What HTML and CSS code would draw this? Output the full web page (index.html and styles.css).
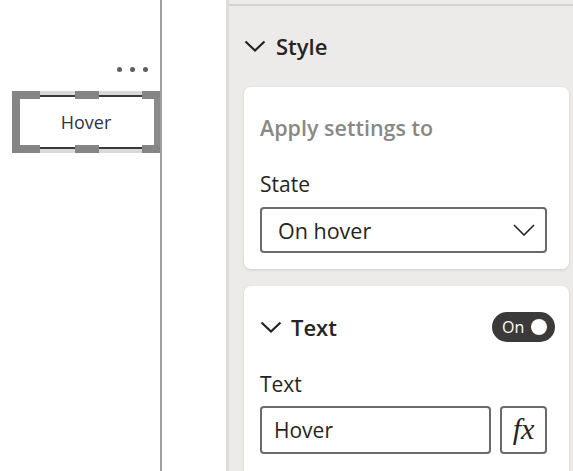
FILE: index.html
```html
<!DOCTYPE html>
<html>
<head>
<meta charset="utf-8">
<link rel="stylesheet" href="styles.css">
</head>
<body>
<div class="app">
  <div class="canvas">
    <div class="dots"><span></span><span></span><span></span></div>
    <div class="sel">
      <div class="btn">Hover</div>
      <i class="h h-tl"></i><i class="h h-tm"></i><i class="h h-tr"></i>
      <i class="h h-bl"></i><i class="h h-bm"></i><i class="h h-br"></i>
    </div>
  </div>
  <div class="divider"></div>
  <div class="gutter"></div>
  <div class="pane">
    <div class="topbar"></div>
    <div class="section-head">
      <svg class="chev" width="22" height="12" viewBox="0 0 22 12"><path d="M1.5 1.5 L11 10.5 L20.5 1.5" fill="none" stroke="#252423" stroke-width="2.2"/></svg>
      <span>Style</span>
    </div>
    <div class="card card1">
      <div class="muted">Apply settings to</div>
      <div class="label label-state">State</div>
      <div class="select">
        <span>On hover</span>
        <svg width="22" height="12" viewBox="0 0 22 12"><path d="M1 1 L11 11 L21 1" fill="none" stroke="#252423" stroke-width="1.6"/></svg>
      </div>
    </div>
    <div class="card card2">
      <div class="card-head">
        <div class="card-title">
          <svg class="chev" width="22" height="12" viewBox="0 0 22 12"><path d="M1.5 1.5 L11 10.5 L20.5 1.5" fill="none" stroke="#252423" stroke-width="2.2"/></svg>
          <span>Text</span>
        </div>
        <div class="toggle"><span>On</span><i></i></div>
      </div>
      <div class="label label-text">Text</div>
      <div class="input-row">
        <div class="input">Hover</div>
        <div class="fx">fx</div>
      </div>
    </div>
  </div>
</div>
</body>
</html>
```
FILE: styles.css
```css
* { box-sizing: border-box; }
html, body { margin: 0; padding: 0; }
body {
  font-family: "Open Sans", "Noto Sans", sans-serif;
  color: #252423;
  background: #ffffff;
  width: 573px;
  height: 471px;
  overflow: hidden;
}
.app {
  display: flex;
  height: 471px;
}
.canvas {
  width: 160px;
  flex: none;
  padding-top: 67px;
}
.dots {
  display: flex;
  justify-content: flex-end;
  gap: 8px;
  padding-right: 12px;
  height: 5px;
}
.dots span {
  width: 5px;
  height: 5px;
  border-radius: 50%;
  background: #605e5c;
}
.sel {
  position: relative;
  margin-top: 19px;
  margin-left: 12px;
  width: 148px;
  height: 62px;
  border-left: 8px solid #858585;
  border-right: 6px solid #8a8a8a;
  padding: 4px 0;
  background: #d9d9d9;
}
.btn {
  height: 54px;
  background: #fff;
  border-top: 2px solid #3b3a39;
  border-bottom: 2px solid #3b3a39;
  display: flex;
  align-items: center;
  justify-content: center;
  font-size: 18px;
  color: #2f3347;
  padding-right: 2px;
}
.h {
  position: absolute;
  height: 8px;
  background: #858585;
}
.h-tl, .h-tm, .h-tr { top: 0; }
.h-bl, .h-bm, .h-br { bottom: 0; }
.h-tl, .h-bl { left: -8px; width: 28px; }
.h-tm, .h-bm { left: 55px; width: 24px; }
.h-tr, .h-br { right: -6px; width: 18px; }
.divider {
  width: 2px;
  flex: none;
  background: #a19f9d;
}
.gutter {
  width: 64px;
  flex: none;
}
.pane {
  flex: 1;
  background: #edebe9;
  border-left: 3px solid #dedcda;
  overflow: hidden;
}
.topbar {
  height: 6px;
  border-bottom: 2px solid #d6d4d2;
}
.section-head {
  height: 81px;
  display: flex;
  align-items: center;
  gap: 10px;
  padding-left: 15px;
  padding-bottom: 1px;
  font-size: 22px;
  font-weight: 600;
}
.chev { flex: none; }
.card {
  background: #fff;
  margin: 0 4px 0 15px;
  border-radius: 7px;
  box-shadow: 0 1px 3px rgba(0,0,0,0.13);
  padding: 26px 22px 16px 16px;
}
.muted {
  font-size: 21.5px;
  font-weight: 600;
  color: #8a8886;
  line-height: 30px;
}
.label {
  font-size: 21px;
  line-height: 30px;
}
.label-state { margin-top: 26px; }
.select {
  margin-top: 8px;
  height: 46px;
  border: 2px solid #6b6a68;
  border-radius: 4px;
  display: flex;
  align-items: center;
  justify-content: space-between;
  padding: 0 10px 0 16px;
  font-size: 21.5px;
}
.card2 { margin-top: 17px; padding-bottom: 40px; }
.card-head {
  height: 30px;
  display: flex;
  align-items: center;
  justify-content: space-between;
  margin-right: -8px;
}
.card-title {
  display: flex;
  align-items: center;
  gap: 9px;
  font-size: 22px;
  font-weight: 600;
}
.toggle {
  width: 63px;
  height: 30px;
  border-radius: 15px;
  background: #3b3a39;
  display: flex;
  align-items: center;
  justify-content: space-between;
  padding: 0 8px 0 10px;
  color: #fff;
  font-size: 16px;
}
.toggle i {
  width: 16px;
  height: 16px;
  border-radius: 50%;
  background: #fff;
}
.label-text { margin-top: 27px; }
.input-row {
  margin-top: 7px;
  display: flex;
  gap: 9px;
  height: 48px;
}
.input {
  flex: 1;
  border: 2px solid #6b6a68;
  border-radius: 4px;
  display: flex;
  align-items: center;
  padding-left: 12px;
  font-size: 21px;
}
.fx {
  width: 47px;
  flex: none;
  border: 2px solid #6b6a68;
  border-radius: 4px;
  display: flex;
  align-items: center;
  justify-content: center;
  font-family: "Liberation Serif", "DejaVu Serif", serif;
  font-style: italic;
  font-size: 30px;
  padding-bottom: 3px;
}
```
